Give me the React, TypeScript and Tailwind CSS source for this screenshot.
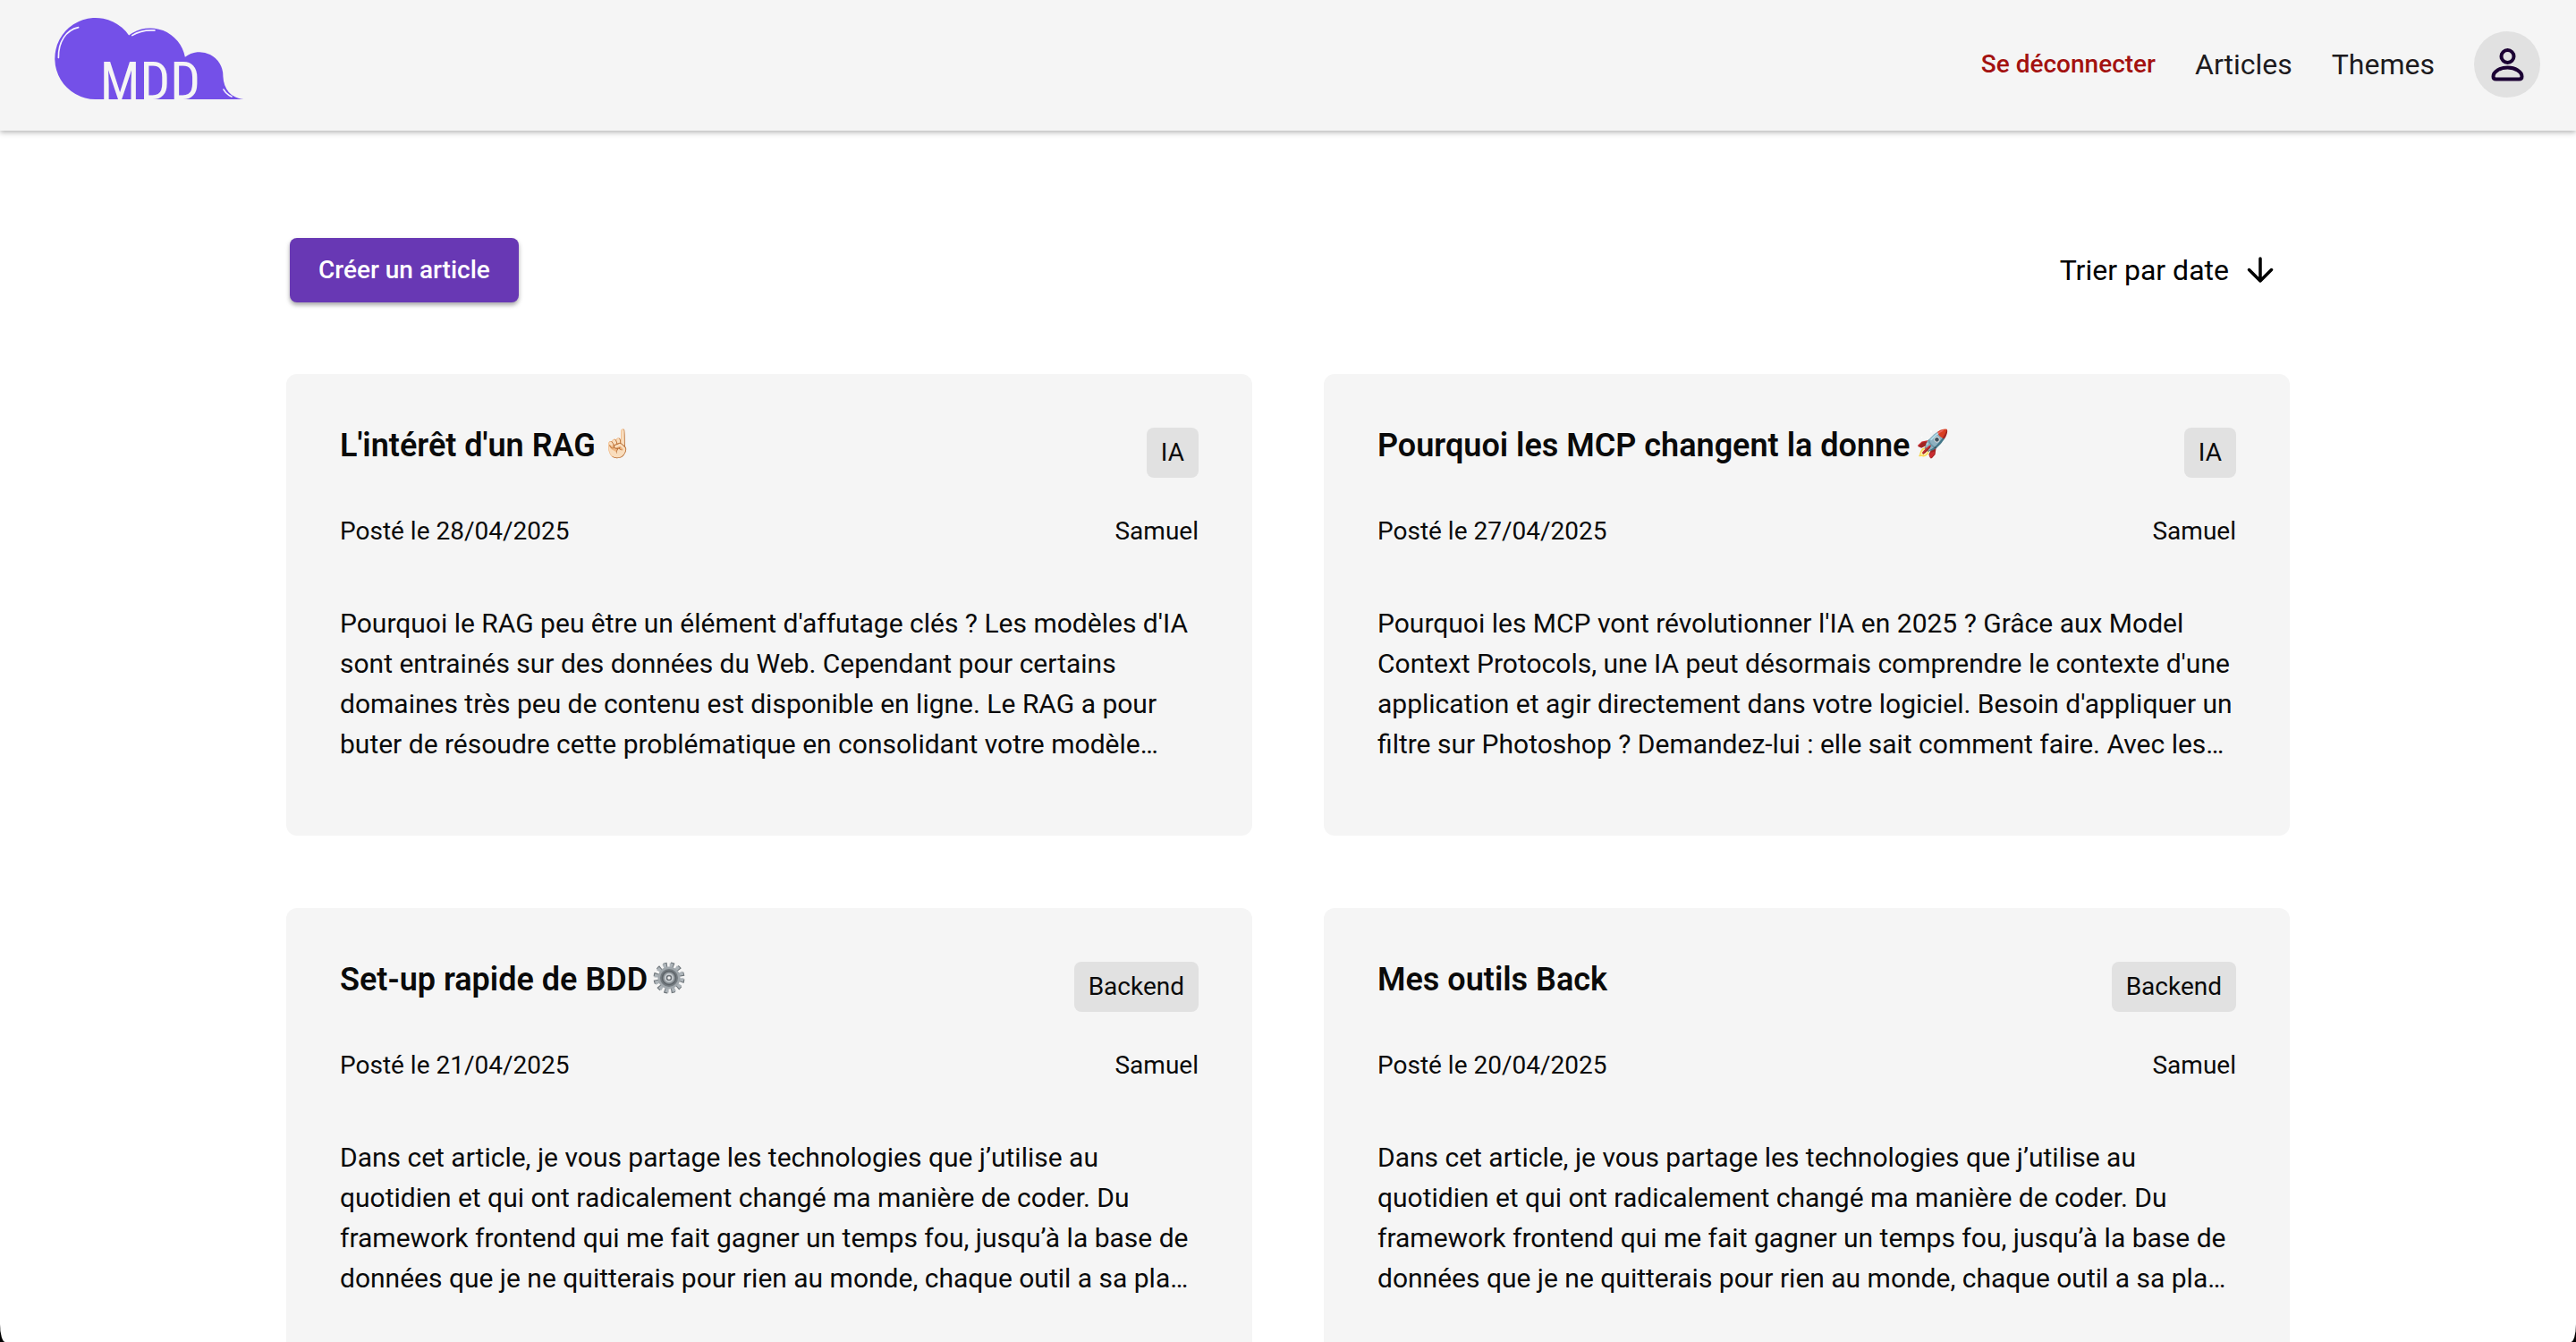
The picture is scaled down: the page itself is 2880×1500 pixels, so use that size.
import type { ReactNode } from 'react';

type Article = {
  title: string;
  icon?: ReactNode;
  theme: string;
  date: string;
  author: string;
  excerpt: string;
};

function GearIcon() {
  return (
    <svg viewBox="-18 -18 36 36" className="size-9" role="img" aria-label="Engrenage">
      <circle r="14" fill="none" stroke="#6d7479" strokeWidth="7" strokeDasharray="3.665 3.665" transform="rotate(5)" />
      <circle r="14" fill="none" stroke="#adb4b9" strokeWidth="5" strokeDasharray="3.665 3.665" transform="rotate(1)" />
      <circle r="12.500" fill="#a0a7ac" />
      <circle r="10" fill="#737a7f" />
      <circle r="7.500" fill="#8f969b" stroke="#5d6368" strokeWidth="1.500" />
      <circle r="5" fill="#c9ced2" />
      <circle r="2.500" fill="#f5f5f5" stroke="#6b7176" strokeWidth="1.500" />
    </svg>
  );
}

const articles: Article[] = [
  {
    title: "L'intérêt d'un RAG",
    icon: '☝🏻',
    theme: 'IA',
    date: '28/04/2025',
    author: 'Samuel',
    excerpt:
      "Pourquoi le RAG peu être un élément d'affutage clés ? Les modèles d'IA sont entrainés sur des données du Web. Cependant pour certains domaines très peu de contenu est disponible en ligne. Le RAG a pour buter de résoudre cette problématique en consolidant votre modèle…",
  },
  {
    title: 'Pourquoi les MCP changent la donne',
    icon: '🚀',
    theme: 'IA',
    date: '27/04/2025',
    author: 'Samuel',
    excerpt:
      "Pourquoi les MCP vont révolutionner l'IA en 2025 ? Grâce aux Model Context Protocols, une IA peut désormais comprendre le contexte d'une application et agir directement dans votre logiciel. Besoin d'appliquer un filtre sur Photoshop ? Demandez-lui : elle sait comment faire. Avec les…",
  },
  {
    title: 'Set-up rapide de BDD',
    icon: <GearIcon />,
    theme: 'Backend',
    date: '21/04/2025',
    author: 'Samuel',
    excerpt:
      'Dans cet article, je vous partage les technologies que j’utilise au quotidien et qui ont radicalement changé ma manière de coder. Du framework frontend qui me fait gagner un temps fou, jusqu’à la base de données que je ne quitterais pour rien au monde, chaque outil a sa pla…',
  },
  {
    title: 'Mes outils Back',
    theme: 'Backend',
    date: '20/04/2025',
    author: 'Samuel',
    excerpt:
      'Dans cet article, je vous partage les technologies que j’utilise au quotidien et qui ont radicalement changé ma manière de coder. Du framework frontend qui me fait gagner un temps fou, jusqu’à la base de données que je ne quitterais pour rien au monde, chaque outil a sa pla…',
  },
];

function Logo() {
  return (
    <svg viewBox="63 59 633 274" className="h-[91px] w-[211px] overflow-visible" role="img" aria-label="MDD">
      <path
        fill="#7450e8"
        d="M199 333A137 137 0 1 1 312 117.500A119 119 0 0 1 501 191A79 79 0 0 1 629 255C631 300 655 327 698 333Z"
      />
      <g fill="none" stroke="#f6f3ff" strokeWidth="5" strokeLinecap="round">
        <path d="M75 193C74 140 100 100 142 91" />
        <path d="M323 118C345 104 370 99 399 101" />
        <path d="M631 300C637 311 646 319 658 324" />
      </g>
      <text x="215" y="333" fill="#f5f5f5" fontSize="178" className="font-['Roboto_Condensed',sans-serif]">
        MDD
      </text>
    </svg>
  );
}

function ProfileIcon() {
  return (
    <svg viewBox="0 0 37 37" className="size-[37px]" fill="none" stroke="#1b0033" strokeWidth="4" aria-hidden="true">
      <circle cx="18.500" cy="9" r="7" />
      <path d="M18.500 21.500C10 21.500 2.500 26 2.500 31.500Q2.500 34.500 5.500 34.500H31.500Q34.500 34.500 34.500 31.500C34.500 26 27 21.500 18.500 21.500Z" />
    </svg>
  );
}

function ArrowDownIcon() {
  return (
    <svg viewBox="0 0 30 30" className="size-[30px]" fill="none" stroke="#000" strokeWidth="3.500" strokeLinecap="round" strokeLinejoin="round" aria-hidden="true">
      <path d="M15 2V27M2.500 14.500L15 27L27.500 14.500" />
    </svg>
  );
}

function Header() {
  return (
    <header className="relative flex h-[146px] items-center justify-between bg-[#f5f5f5] pr-10 pl-[61px] shadow-[0_2px_6px_rgba(0,0,0,0.3)]">
      <a href="#accueil" className="mb-[15px]">
        <Logo />
      </a>
      <nav className="flex items-center gap-11 pb-[2px] text-[32px] text-[#1d1b1e]">
        <button type="button" className="text-[28px] font-medium text-[#a31210]">
          Se déconnecter
        </button>
        <a href="#articles">Articles</a>
        <a href="#themes">Themes</a>
        <a
          href="#profil"
          aria-label="Profil"
          className="flex size-[74px] items-center justify-center rounded-full bg-[#e1e1e1]"
        >
          <ProfileIcon />
        </a>
      </nav>
    </header>
  );
}

function ArticleCard({ article }: { article: Article }) {
  return (
    <article className="rounded-xl bg-[#f5f5f5] px-[60px] pt-[60px] pb-20">
      <div className="flex items-start justify-between">
        <h2 className="flex items-start gap-1.5 text-[36px] leading-10 font-semibold">
          {article.title}
          {article.icon && <span className="text-[30px] leading-9">{article.icon}</span>}
        </h2>
        <span className="rounded-lg bg-[#e1e1e1] px-4 text-[28px] leading-[56px]">{article.theme}</span>
      </div>
      <div className="mt-10 flex justify-between text-[28px] leading-10">
        <p>Posté le {article.date}</p>
        <p>{article.author}</p>
      </div>
      <p className="mt-[60px] text-[30px] leading-[45px]">{article.excerpt}</p>
    </article>
  );
}

export default function App() {
  return (
    <div className="h-screen bg-black font-[Roboto,sans-serif] text-[#0a0a0a]">
      <div className="h-full overflow-y-auto bg-white [border-radius:0_0_6px_6px/0_0_20px_20px] [scrollbar-width:none]">
        <Header />
        <main className="mx-auto max-w-[2240px] pt-[120px] pb-20">
          <div className="flex items-center justify-between pr-[18px] pl-1">
            <button
              type="button"
              className="h-[72px] rounded-lg bg-[#6838b4] px-8 text-[28px] font-medium text-white shadow-[0_3px_5px_rgba(0,0,0,0.35)]"
            >
              Créer un article
            </button>
            <button type="button" className="flex items-center gap-5 text-[32px] text-black">
              Trier par date
              <ArrowDownIcon />
            </button>
          </div>
          <section className="mt-20 grid grid-cols-2 gap-x-20 gap-y-[81px]">
            {articles.map((article) => (
              <ArticleCard key={article.title} article={article} />
            ))}
          </section>
        </main>
      </div>
    </div>
  );
}
